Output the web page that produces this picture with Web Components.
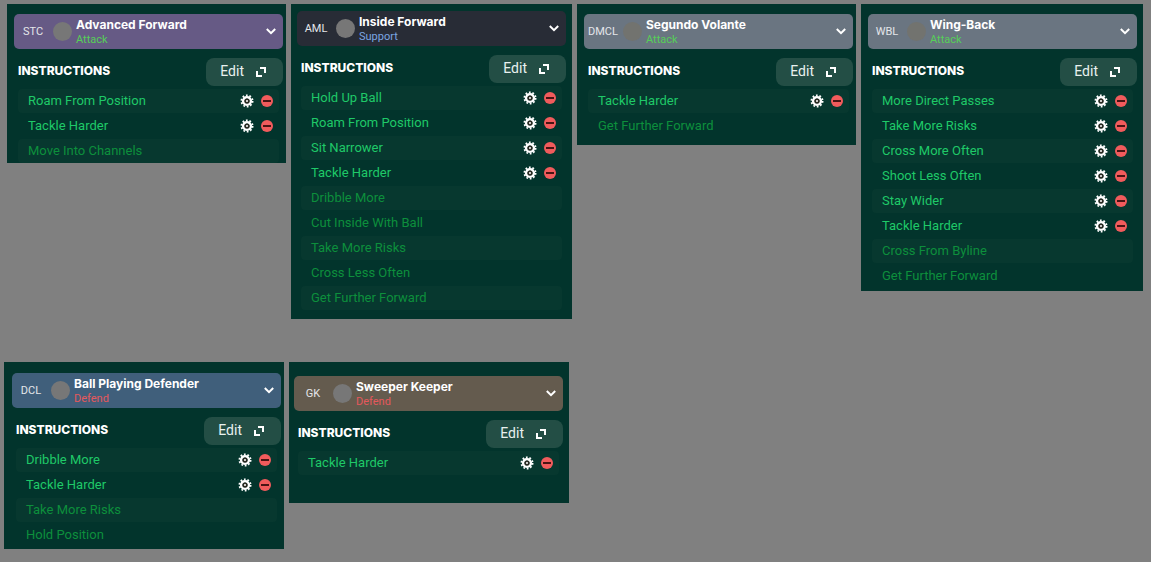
<!DOCTYPE html>
<html lang="en">
<head>
<meta charset="UTF-8">
<meta name="viewport" content="width=device-width, initial-scale=1">
<title>Player Instructions</title>
<style>
    body {
        margin: 0;
        min-height: 100vh;
        background: #808080;
        color: #fff;
        font-family: Roboto, "Liberation Sans", sans-serif;
    }

    main {
        display: grid;
        row-gap: 43px;
        padding: 4px 8px 0 4px;
    }

    .line {
        display: grid;
        column-gap: 5px;
        align-items: start;
    }

    .outfield {
        grid-template-columns: 279fr 281fr 279fr 282fr;
        padding-left: 3px;
    }

    .defence {
        grid-template-columns: 280fr 280fr 569fr;
    }

    /* Space round the contents of each panel */
    #stc { padding: 10px 3px 0 7px; }
    #aml { padding: 7px 6px 9px 6px; }
    #dmcl { padding: 10px 3px 7px 7px; }
    #wbl { padding: 10px 6px 3px 7px; }
    #dcl { padding: 11px 3px 2px 8px; }
    #gk { padding: 14px 6px 28px 5px; }

    #stc { --role-bg: #665a85; }
    #aml { --role-bg: #282c36; }
    #dmcl, #wbl { --role-bg: #6a7581; --dot: #72736f; }
    #dcl { --role-bg: #405f7b; }
    #gk { --role-bg: #645b4e; }
</style>
</head>
<body>
<main>
    <div class="line outfield">
        <role-panel id="stc">
            <role-selector slot="role" position="STC" name="Advanced Forward" duty="Attack"></role-selector>
            <instruction-item editable>Roam From Position</instruction-item>
            <instruction-item editable>Tackle Harder</instruction-item>
            <instruction-item>Move Into Channels</instruction-item>
        </role-panel>
        <role-panel id="aml">
            <role-selector slot="role" position="AML" name="Inside Forward" duty="Support"></role-selector>
            <instruction-item editable>Hold Up Ball</instruction-item>
            <instruction-item editable>Roam From Position</instruction-item>
            <instruction-item editable>Sit Narrower</instruction-item>
            <instruction-item editable>Tackle Harder</instruction-item>
            <instruction-item>Dribble More</instruction-item>
            <instruction-item>Cut Inside With Ball</instruction-item>
            <instruction-item>Take More Risks</instruction-item>
            <instruction-item>Cross Less Often</instruction-item>
            <instruction-item>Get Further Forward</instruction-item>
        </role-panel>
        <role-panel id="dmcl">
            <role-selector slot="role" position="DMCL" name="Segundo Volante" duty="Attack"></role-selector>
            <instruction-item editable>Tackle Harder</instruction-item>
            <instruction-item>Get Further Forward</instruction-item>
        </role-panel>
        <role-panel id="wbl">
            <role-selector slot="role" position="WBL" name="Wing-Back" duty="Attack"></role-selector>
            <instruction-item editable>More Direct Passes</instruction-item>
            <instruction-item editable>Take More Risks</instruction-item>
            <instruction-item editable>Cross More Often</instruction-item>
            <instruction-item editable>Shoot Less Often</instruction-item>
            <instruction-item editable>Stay Wider</instruction-item>
            <instruction-item editable>Tackle Harder</instruction-item>
            <instruction-item>Cross From Byline</instruction-item>
            <instruction-item>Get Further Forward</instruction-item>
        </role-panel>
    </div>
    <div class="line defence">
        <role-panel id="dcl">
            <role-selector slot="role" position="DCL" name="Ball Playing Defender" duty="Defend"></role-selector>
            <instruction-item editable>Dribble More</instruction-item>
            <instruction-item editable>Tackle Harder</instruction-item>
            <instruction-item>Take More Risks</instruction-item>
            <instruction-item>Hold Position</instruction-item>
        </role-panel>
        <role-panel id="gk">
            <role-selector slot="role" position="GK" name="Sweeper Keeper" duty="Defend"></role-selector>
            <instruction-item editable>Tackle Harder</instruction-item>
        </role-panel>
    </div>
</main>

<script>
/**
 * Panel with a role selector and the list of its instructions
 */
class RolePanel extends HTMLElement {
    constructor() {
        super();
        this.attachShadow({ mode: 'open' });
        this.shadowRoot.innerHTML = `
            <style>
                :host {
                    display: block;
                    background: #02342c;
                }

                header {
                    display: flex;
                    align-items: center;
                    justify-content: space-between;
                    margin: 9px 0 3px;
                    padding-left: 4px;
                }

                h2 {
                    margin: 0;
                    padding-bottom: 2px;
                    font: 800 12px/16px Inter, sans-serif;
                }

                .edit {
                    display: flex;
                    align-items: center;
                    gap: 12px;
                    height: 28px;
                    padding: 0 17px 0 14px;
                    border: 0;
                    border-radius: 8px;
                    background: #234e45;
                    color: #e9f1ef;
                    font: 14px/16px Roboto, sans-serif;
                    cursor: pointer;
                }

                .edit span {
                    padding-bottom: 2px;
                }

                .list {
                    display: flex;
                    flex-direction: column;
                    gap: 1px;
                    margin: 0 4px;
                }

                ::slotted(instruction-item:nth-child(even)) {
                    background: #07382f;
                }
            </style>

            <slot name="role"></slot>
            <header>
                <h2>INSTRUCTIONS</h2>
                <button class="edit" type="button">
                    <span>Edit</span>
                    <svg width="10" height="10" viewBox="0 0 10 10" fill="none" stroke="#fff" stroke-width="2" aria-hidden="true">
                        <path d="M4 1h5v5M1 4v5h5"/>
                    </svg>
                </button>
            </header>
            <div class="list" role="list"><slot></slot></div>
        `;
    }
}

/**
 * Drop-down bar
 * Usage: <role-selector position="GK" name="Sweeper Keeper" duty="Defend"></role-selector>
 */
class RoleSelector extends HTMLElement {
    constructor() {
        super();
        this.attachShadow({ mode: 'open' });
    }

    connectedCallback() {
        this.render();
    }

    render() {
        const duty = this.getAttribute('duty');

        this.shadowRoot.innerHTML = `
            <style>
                :host {
                    display: block;
                }

                button {
                    display: flex;
                    align-items: center;
                    width: 100%;
                    height: 35px;
                    padding: 0 7px 0 0;
                    border: 0;
                    border-radius: 5px;
                    background: var(--role-bg);
                    color: #fff;
                    font: 11px/15px Roboto, sans-serif;
                    text-align: left;
                    cursor: pointer;
                }

                .position {
                    width: 38px;
                    color: #e4e6ea;
                    text-align: center;
                }

                .dot {
                    width: 19px;
                    height: 19px;
                    margin: 0 4px 0 1px;
                    border-radius: 50%;
                    background: var(--dot, #777777);
                }

                .role {
                    flex: 1;
                    display: flex;
                    flex-direction: column;
                }

                .name {
                    font: 700 12px/15px Inter, sans-serif;
                }

                .duty {
                    color: ${this.getDutyColor(duty)};
                }
            </style>

            <button type="button" aria-haspopup="listbox">
                <span class="position">${this.getAttribute('position')}</span>
                <span class="dot"></span>
                <span class="role">
                    <span class="name">${this.getAttribute('name')}</span>
                    <span class="duty">${duty}</span>
                </span>
                <svg width="10" height="7" viewBox="0 0 10 7" fill="none" stroke="#fff" stroke-width="2" aria-hidden="true">
                    <path d="M.8 1 5 5.2 9.2 1"/>
                </svg>
            </button>
        `;
    }

    getDutyColor(duty) {
        const colors = {
            Attack: '#56cf58',
            Support: '#7ba6e2',
            Defend: '#e5585c'
        };
        return colors[duty] || '#fff';
    }
}

/**
 * One instruction; with "editable" it is brighter and has its two buttons
 */
class InstructionItem extends HTMLElement {
    constructor() {
        super();
        this.attachShadow({ mode: 'open' });
    }

    connectedCallback() {
        this.setAttribute('role', 'listitem');
        this.render();
    }

    render() {
        this.shadowRoot.innerHTML = `
            <style>
                :host {
                    display: flex;
                    align-items: center;
                    gap: 7px;
                    height: 24px;
                    padding: 0 6px 0 10px;
                    border-radius: 4px;
                    color: #0d8f3c;
                    font: 13px/16px Roboto, sans-serif;
                }

                :host([editable]) {
                    color: #1fc968;
                }

                .label {
                    flex: 1;
                    padding-bottom: 1px;
                }

                button {
                    display: flex;
                    padding: 0;
                    border: 0;
                    background: none;
                    cursor: pointer;
                }
            </style>

            <span class="label"><slot></slot></span>
            ${this.hasAttribute('editable') ? this.getButtons() : ''}
        `;
    }

    getButtons() {
        return `
            <button type="button" aria-label="Settings">
                <svg width="14" height="14" viewBox="0 0 14 14" fill="none" stroke="#fff">
                    <circle cx="7" cy="7" r="5.6" stroke-width="1.8" stroke-dasharray="1.76 1.76"/>
                    <circle cx="7" cy="7" r="3.8" stroke-width="2.6"/>
                    <circle cx="7" cy="7" r="1.8" stroke="#2a2a22" stroke-width="1.6" fill="#fff"/>
                </svg>
            </button>
            <button type="button" aria-label="Remove">
                <svg width="12" height="12" viewBox="0 0 12 12">
                    <circle cx="6" cy="6" r="6" fill="#f15b5c"/>
                    <path d="M2 5h8v2H2z" fill="#4a1414"/>
                </svg>
            </button>
        `;
    }
}

customElements.define('role-panel', RolePanel);
customElements.define('role-selector', RoleSelector);
customElements.define('instruction-item', InstructionItem);
</script>
</body>
</html>
